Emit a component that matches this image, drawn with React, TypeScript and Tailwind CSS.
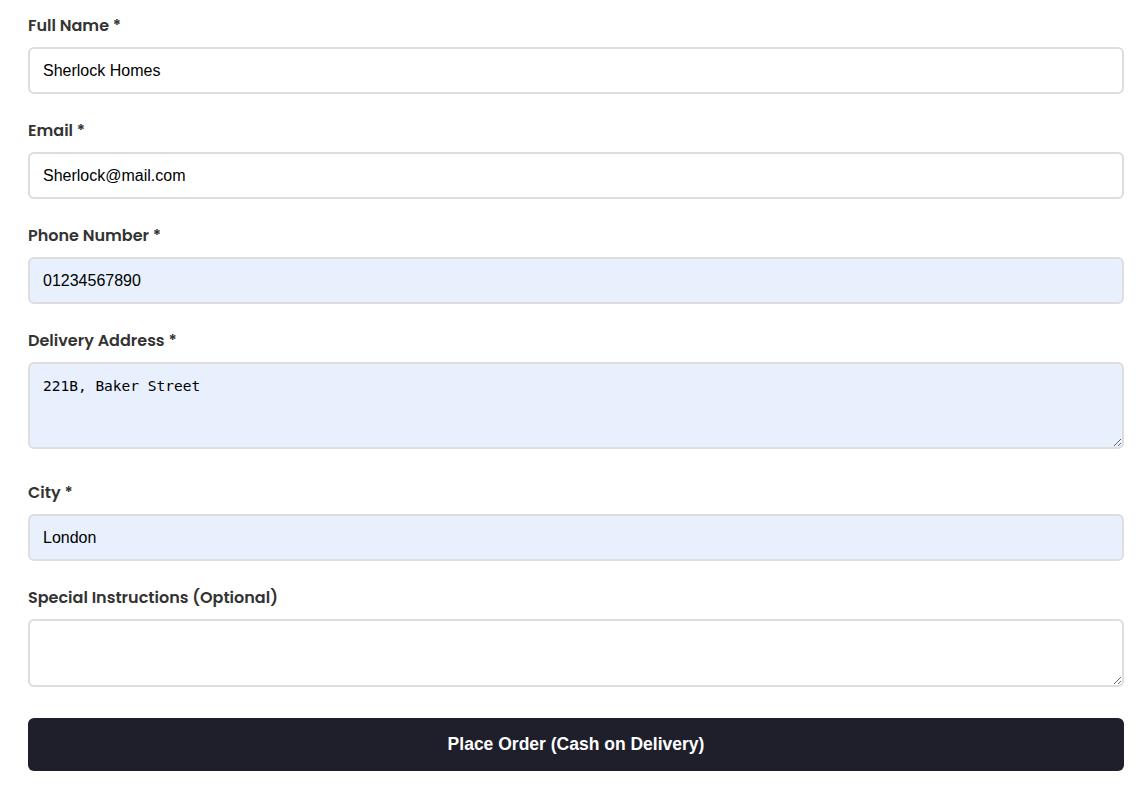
import React from 'react';

const labelCls =
  "block text-[16px] leading-[22px] font-semibold text-[#333] font-['Poppins','Lato','Open_Sans',sans-serif] mb-[10px]";
const boxCls =
  "block w-full border-2 border-[#dddddd] rounded-[6px] px-[13px] text-black outline-none";
const sansCls = "text-[16px] font-['Liberation_Sans',Arial,sans-serif]";

export default function App() {
  return (
    <div className="min-h-screen bg-white">
      <form className="pl-[28px] pt-[15px] w-[1124px]">
        <div className="w-[1096px]">
          <label className={labelCls}>Full Name *</label>
          <input className={`${boxCls} ${sansCls} h-[47px] bg-white`} defaultValue="Sherlock Homes" />
        </div>

        <div className="w-[1096px] mt-[26px]">
          <label className={labelCls}>Email *</label>
          <input className={`${boxCls} ${sansCls} h-[47px] bg-white`} defaultValue="Sherlock@mail.com" />
        </div>

        <div className="w-[1096px] mt-[26px]">
          <label className={labelCls}>Phone Number *</label>
          <input className={`${boxCls} ${sansCls} h-[47px] bg-[#e8f0fe]`} defaultValue="01234567890" />
        </div>

        <div className="w-[1096px] mt-[26px]">
          <label className={labelCls}>Delivery Address *</label>
          <textarea
            className={`${boxCls} h-[87px] bg-[#e8f0fe] pt-[13px] font-['DejaVu_Sans_Mono','Liberation_Mono',monospace] text-[14.5px] leading-[19px]`}
            defaultValue="221B, Baker Street"
          />
        </div>

        <div className="w-[1096px] mt-[33px]">
          <label className={labelCls}>City *</label>
          <input className={`${boxCls} ${sansCls} h-[47px] bg-[#e8f0fe]`} defaultValue="London" />
        </div>

        <div className="w-[1096px] mt-[26px]">
          <label className={labelCls}>Special Instructions (Optional)</label>
          <textarea className={`${boxCls} ${sansCls} h-[68px] bg-white pt-[12px]`} />
        </div>

        <button
          type="button"
          className="mt-[31px] w-[1096px] h-[53px] rounded-[6px] bg-[#1e1f2b] text-white text-[17.5px] font-bold font-['Liberation_Sans',Arial,sans-serif]"
        >
          Place Order (Cash on Delivery)
        </button>
      </form>
    </div>
  );
}
